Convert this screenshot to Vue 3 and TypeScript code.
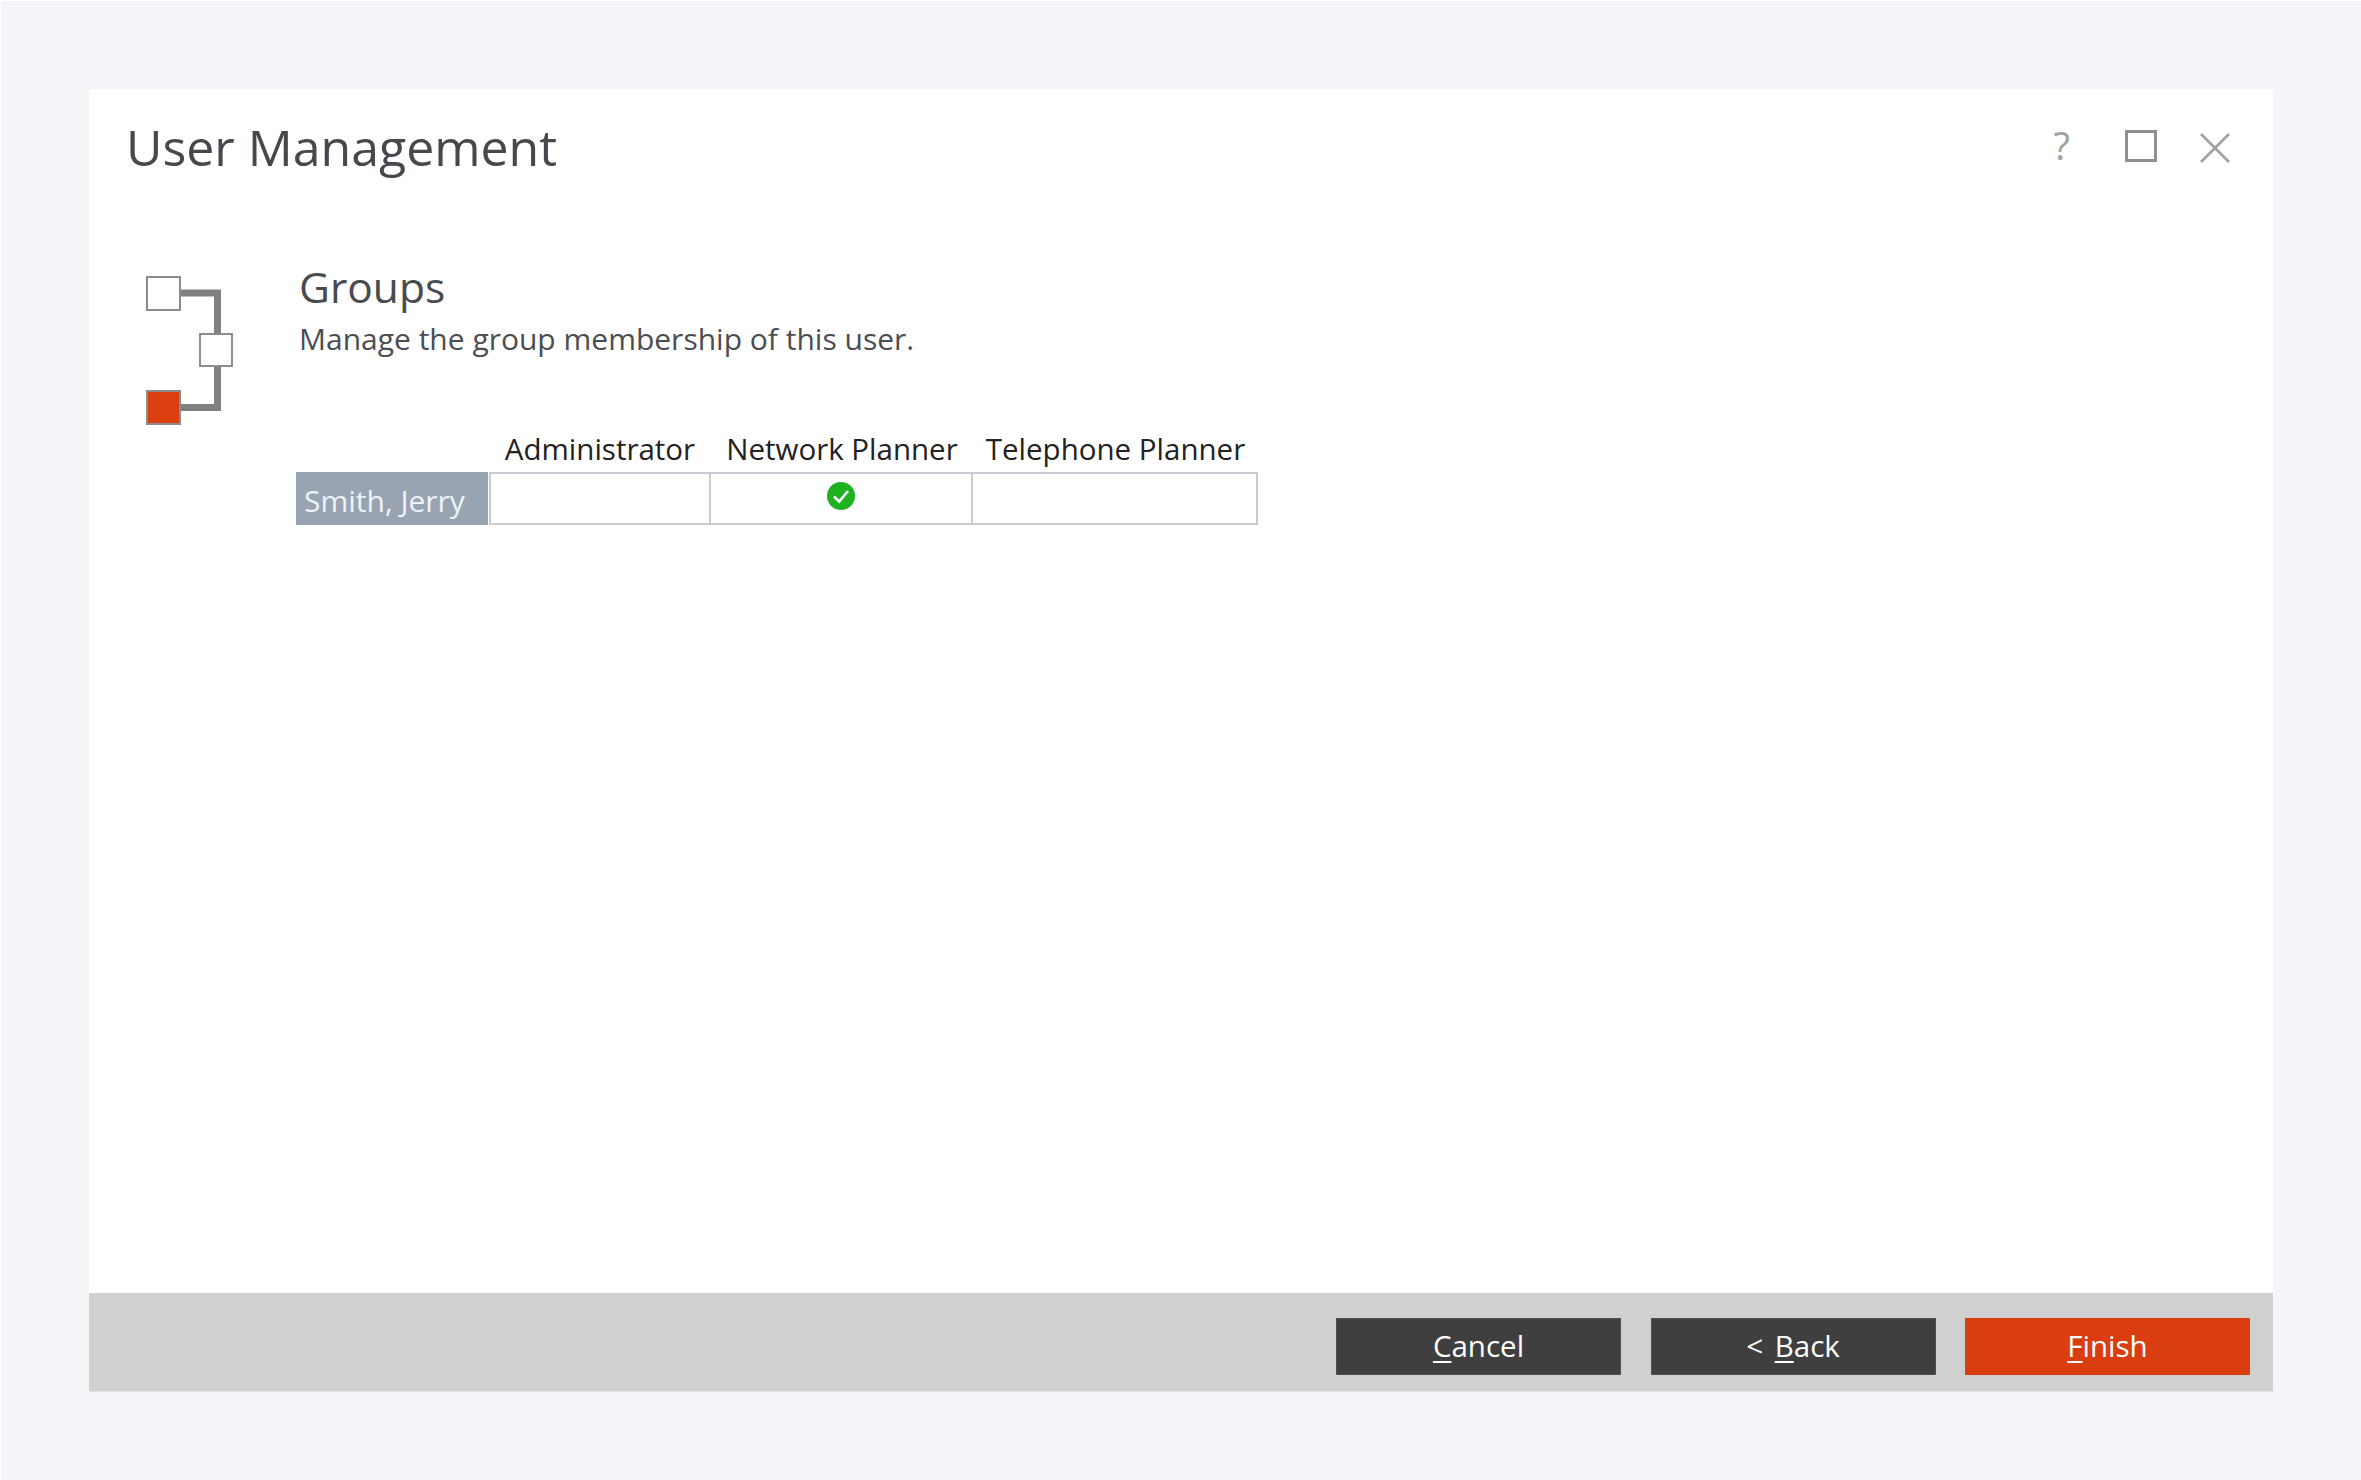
<script setup lang="ts">
const groups: string[] = ['Administrator', 'Network Planner', 'Telephone Planner']
const memberships: boolean[] = [false, true, false]
</script>

<template>
  <div class="page">
    <section class="window">
      <header class="titlebar">
        <h1 class="title">User Management</h1>
        <div class="controls">
          <span class="help">?</span>
          <span class="maximize"></span>
          <svg class="close" viewBox="0 0 30 30" width="30" height="30" aria-hidden="true">
            <path d="M1 1 L29 29 M29 1 L1 29" fill="none" stroke="#a0a0a0" stroke-width="2.6" />
          </svg>
        </div>
      </header>

      <main class="body">
        <svg class="steps" viewBox="0 0 90 150" width="90" height="150" aria-hidden="true">
          <path d="M34 17 H71.5 V131.5 H34" fill="none" stroke="#808080" stroke-width="7" />
          <rect x="1" y="1" width="33" height="33" fill="#fff" stroke="#8c8c8c" stroke-width="2" />
          <rect x="54" y="58" width="32" height="32" fill="#fff" stroke="#8c8c8c" stroke-width="2" />
          <rect x="1" y="115" width="33" height="33" fill="#db3f10" stroke="#8c8c8c" stroke-width="2" />
        </svg>

        <div class="content">
          <h2 class="heading">Groups</h2>
          <p class="subtitle">Manage the group membership of this user.</p>

          <div class="matrix">
            <div class="corner"></div>
            <div v-for="g in groups" :key="g" class="group-name">{{ g }}</div>
            <div class="user-name">Smith, Jerry</div>
            <div v-for="(m, i) in memberships" :key="i" class="cell">
              <svg v-if="m" class="check" viewBox="0 0 28 28" width="28" height="28" aria-hidden="true">
                <circle cx="14" cy="14" r="14" fill="#1db31f" />
                <path d="M7 14.5 L12.2 19.6 L21 9" fill="none" stroke="#fff" stroke-width="2.6" />
              </svg>
            </div>
          </div>
        </div>
      </main>

      <footer class="footer">
        <button class="btn" type="button"><u>C</u>ancel</button>
        <button class="btn back" type="button">&lt; <u>B</u>ack</button>
        <button class="btn primary" type="button"><u>F</u>inish</button>
      </footer>
    </section>
  </div>
</template>

<style>
html, body { margin: 0; background: #fff; }
</style>

<style scoped>
.page {
  box-sizing: border-box;
  width: 2361px;
  height: 1480px;
  margin-left: 1px;
  margin-top: 1px;
  padding: 88px 88px 88px 88px;
  background: #f4f5f9;
  font-family: "Open Sans", "Noto Sans", sans-serif;
}
.window {
  display: flex;
  flex-direction: column;
  height: 1303px;
  width: 2184px;
  background: #fff;
}
.titlebar {
  display: flex;
  justify-content: space-between;
  align-items: flex-start;
  padding: 26px 43px 0 37px;
  height: 98px;
  box-sizing: border-box;
}
.title {
  margin: 0;
  font-size: 50px;
  font-weight: 400;
  line-height: 64px;
  color: #45484d;
}
.controls {
  display: flex;
  align-items: flex-start;
  gap: 43px;
  padding-top: 15px;
}
.help {
  font-size: 38px;
  line-height: 36px;
  height: 36px;
  margin: -3px 12px 0 0;
  color: #a0a0a0;
}
.maximize {
  box-sizing: border-box;
  width: 32px;
  height: 32px;
  border: 3px solid #8f8f8f;
}
.close { margin-top: 3px; }
.body {
  flex: 1;
  display: flex;
  padding: 89px 0 0 57px;
}
.steps { flex: none; }
.content {
  margin-left: 64px;
  margin-top: -16px;
}
.heading {
  margin: 0 0 0 -1px;
  font-size: 42.5px;
  font-weight: 400;
  line-height: 54px;
  color: #484b50;
}
.subtitle {
  margin: 6px 0 0 -1px;
  font-size: 30px;
  font-weight: 400;
  line-height: 38px;
  color: #4a4d52;
}
.matrix {
  display: grid;
  grid-template-columns: 193px 222px 262px 285px;
  grid-template-rows: 48px 53px;
  margin-left: -4px;
  margin-top: 66px;
}
.group-name {
  display: flex;
  justify-content: center;
  align-items: center;
  font-size: 29.5px;
  color: #222;
  line-height: 40px;
  padding-top: 2px;
  white-space: nowrap;
}
.user-name {
  box-sizing: border-box;
  background: #98a4b1;
  color: #eef2f6;
  font-size: 30px;
  font-weight: 400;
  line-height: 53px;
  padding: 2px 0 0 8px;
  margin-right: 1px;
  overflow: hidden;
  white-space: nowrap;
}
.cell {
  box-sizing: border-box;
  border: 2px solid #c8ccd2;
  border-left-width: 0;
  display: flex;
  justify-content: center;
  padding-top: 8px;
  background: #fff;
}
.user-name + .cell { border-left-width: 2px; }
.check { display: block; }
.footer {
  flex: none;
  height: 57px;
  display: flex;
  justify-content: flex-end;
  gap: 29.5px;
  padding: 25px 23px 16px 0;
  background: #d0d0d0;
  border-bottom: 1px solid #e2e2e4;
}
.btn {
  width: 285px;
  height: 57px;
  border: 1px solid #525252;
  background: #3f3f3f;
  color: #fff;
  font-family: inherit;
  font-size: 29.5px;
  font-weight: 400;
  padding: 0 0 3px;
  box-sizing: border-box;
}
.back { word-spacing: 4px; }
.btn u { text-underline-offset: 4px; text-decoration-thickness: 2px; }
.primary {
  background: #d93d10;
  border-color: #d93d10;
}
</style>
